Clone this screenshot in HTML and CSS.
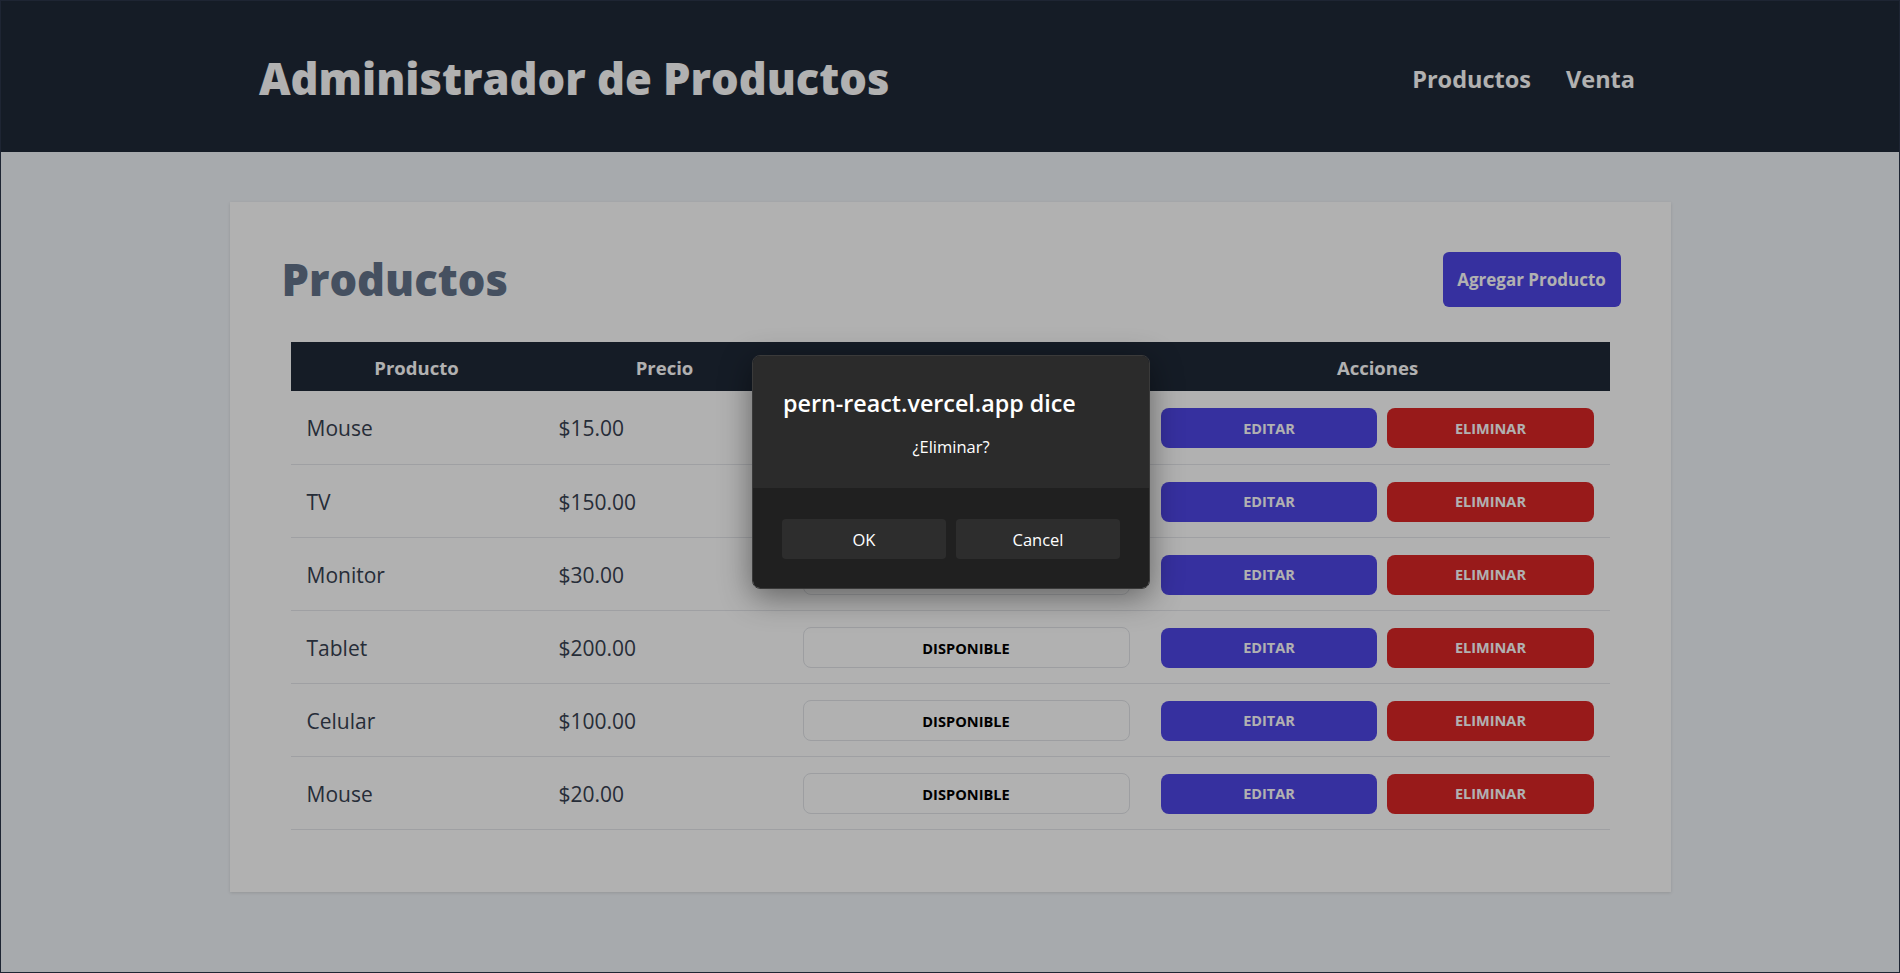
FILE: index.html
```html
<!DOCTYPE html>
<html lang="es">
<head>
<meta charset="utf-8">
<title>Administrador de Productos</title>
<link rel="stylesheet" href="styles.css">
</head>
<body>
<header class="topbar">
  <div class="topbar-inner">
    <h1 class="brand">Administrador de Productos</h1>
    <nav class="nav">
      <a class="nav-link" href="#">Productos</a>
      <a class="nav-link" href="#">Venta</a>
    </nav>
  </div>
</header>

<main class="card">
  <div class="card-head">
    <h2 class="card-title">Productos</h2>
    <button class="btn-add">Agregar Producto</button>
  </div>
  <div class="table-wrap">
    <table class="table">
      <colgroup>
        <col class="c1"><col class="c2"><col class="c3"><col class="c4">
      </colgroup>
      <thead>
        <tr><th>Producto</th><th>Precio</th><th>Estado</th><th>Acciones</th></tr>
      </thead>
      <tbody>
        <tr><td>Mouse</td><td>$15.00</td><td><span class="badge">DISPONIBLE</span></td><td><div class="actions"><button class="btn btn-edit">EDITAR</button><button class="btn btn-del">ELIMINAR</button></div></td></tr>
        <tr><td>TV</td><td>$150.00</td><td><span class="badge">DISPONIBLE</span></td><td><div class="actions"><button class="btn btn-edit">EDITAR</button><button class="btn btn-del">ELIMINAR</button></div></td></tr>
        <tr><td>Monitor</td><td>$30.00</td><td><span class="badge">DISPONIBLE</span></td><td><div class="actions"><button class="btn btn-edit">EDITAR</button><button class="btn btn-del">ELIMINAR</button></div></td></tr>
        <tr><td>Tablet</td><td>$200.00</td><td><span class="badge">DISPONIBLE</span></td><td><div class="actions"><button class="btn btn-edit">EDITAR</button><button class="btn btn-del">ELIMINAR</button></div></td></tr>
        <tr><td>Celular</td><td>$100.00</td><td><span class="badge">DISPONIBLE</span></td><td><div class="actions"><button class="btn btn-edit">EDITAR</button><button class="btn btn-del">ELIMINAR</button></div></td></tr>
        <tr><td>Mouse</td><td>$20.00</td><td><span class="badge">DISPONIBLE</span></td><td><div class="actions"><button class="btn btn-edit">EDITAR</button><button class="btn btn-del">ELIMINAR</button></div></td></tr>
      </tbody>
    </table>
  </div>
</main>

<div class="dim"></div>

<div class="dialog" role="alertdialog">
  <div class="dialog-body">
    <div class="dialog-title">pern-react.vercel.app dice</div>
    <div class="dialog-msg">¿Eliminar?</div>
  </div>
  <div class="dialog-foot">
    <button class="dbtn">OK</button>
    <button class="dbtn">Cancel</button>
  </div>
</div>
<div class="frame"></div>
</body>
</html>
```

FILE: styles.css
```css
* { box-sizing: border-box; }
html, body { margin: 0; padding: 0; }
body {
  background: #f1f5f9;
  font-family: "Open Sans", "Noto Sans", sans-serif;
  min-height: 973px;
  overflow: hidden;
}

.topbar {
  background: #1f2937;
  height: 152px;
}
.topbar-inner {
  height: 100%;
  padding: 0 265px 0 259px;
  display: flex;
  align-items: center;
  justify-content: space-between;
}
.brand {
  margin: 0;
  color: #ffffff;
  font-size: 43.5px;
  font-weight: 800;
  letter-spacing: 0;
  line-height: 1;
  padding-top: 6px;
}
.nav { display: flex; gap: 35px; padding-top: 5px; }
.nav-link {
  color: #ffffff;
  text-decoration: none;
  font-size: 23.5px;
  font-weight: 700;
}

.card {
  width: 1441px;
  margin: 50px auto 0;
  background: #ffffff;
  padding: 50px 50px 62px 50px;
  box-shadow: 0 1px 3px rgba(0,0,0,0.12);
}
.card-head {
  display: flex;
  justify-content: space-between;
  align-items: center;
  height: 55px;
}
.card-title {
  margin: 0 0 0 2px;
  font-size: 43.5px;
  font-weight: 800;
  color: #64748b;
  line-height: 1;
}
.btn-add {
  width: 178px;
  height: 55px;
  border: 0;
  border-radius: 6px;
  background: #4f46e5;
  color: #ffffff;
  font-family: inherit;
  font-size: 17px;
  font-weight: 700;
}

.table-wrap { padding: 35px 11px 0; }
.table {
  width: 100%;
  border-collapse: collapse;
  table-layout: fixed;
}
.c1 { width: 252px; }
.c2 { width: 244px; }
.c3 { width: 359px; }
.c4 { width: 464px; }
.table th {
  background: #1f2937;
  color: #ffffff;
  height: 49px;
  font-size: 18.5px;
  font-weight: 700;
  text-align: center;
  padding: 1px 0 0;
}
.table td {
  height: 73px;
  border-bottom: 1px solid #e5e7eb;
  padding: 2px 16px 0;
  font-size: 21px;
  color: #374151;
  vertical-align: middle;
}
.badge {
  display: flex;
  align-items: center;
  justify-content: center;
  height: 41px;
  border: 1px solid #e2e4e8;
  border-radius: 8px;
  color: #000000;
  font-size: 14.6px;
  font-weight: 700;
}
.actions { display: flex; gap: 10px; margin-left: -1px; }
.btn {
  height: 40px;
  border: 0;
  border-radius: 8px;
  color: #ffffff;
  font-family: inherit;
  font-size: 14.5px;
  font-weight: 700;
}
.btn-edit { width: 219px; background: #4f46e5; }
.btn-del { width: 208px; background: #dc2626; }

.dim {
  position: fixed;
  inset: 0;
  background: rgba(0,0,0,0.306);
}
.frame {
  position: fixed;
  inset: 0;
  border: 1px solid #1e2533;
  pointer-events: none;
}

.dialog {
  position: absolute;
  left: 752px;
  top: 355px;
  width: 398px;
  height: 234px;
  border-radius: 8px;
  overflow: hidden;
  box-shadow: 0 8px 32px rgba(0,0,0,0.45);
  font-family: "Open Sans", "Noto Sans", sans-serif;
  border: 1px solid #3a3a3a;
}
.dialog-body {
  background: #2b2b2b;
  height: 132px;
  padding: 32px 30px 0;
}
.dialog-title {
  color: #ffffff;
  font-size: 23.3px;
  font-weight: 600;
  line-height: 30px;
}
.dialog-msg {
  color: #ffffff;
  font-size: 16.5px;
  line-height: 22px;
  text-align: center;
  margin-top: 18px;
}
.dialog-foot {
  background: #202020;
  height: 102px;
  padding: 31px 29px 0 29px;
  display: flex;
  gap: 10px;
}
.dbtn {
  width: 164px;
  height: 40px;
  background: #2d2d2d;
  border: 0;
  border-radius: 4px;
  color: #ffffff;
  font-family: inherit;
  font-size: 16.5px;
}
```
